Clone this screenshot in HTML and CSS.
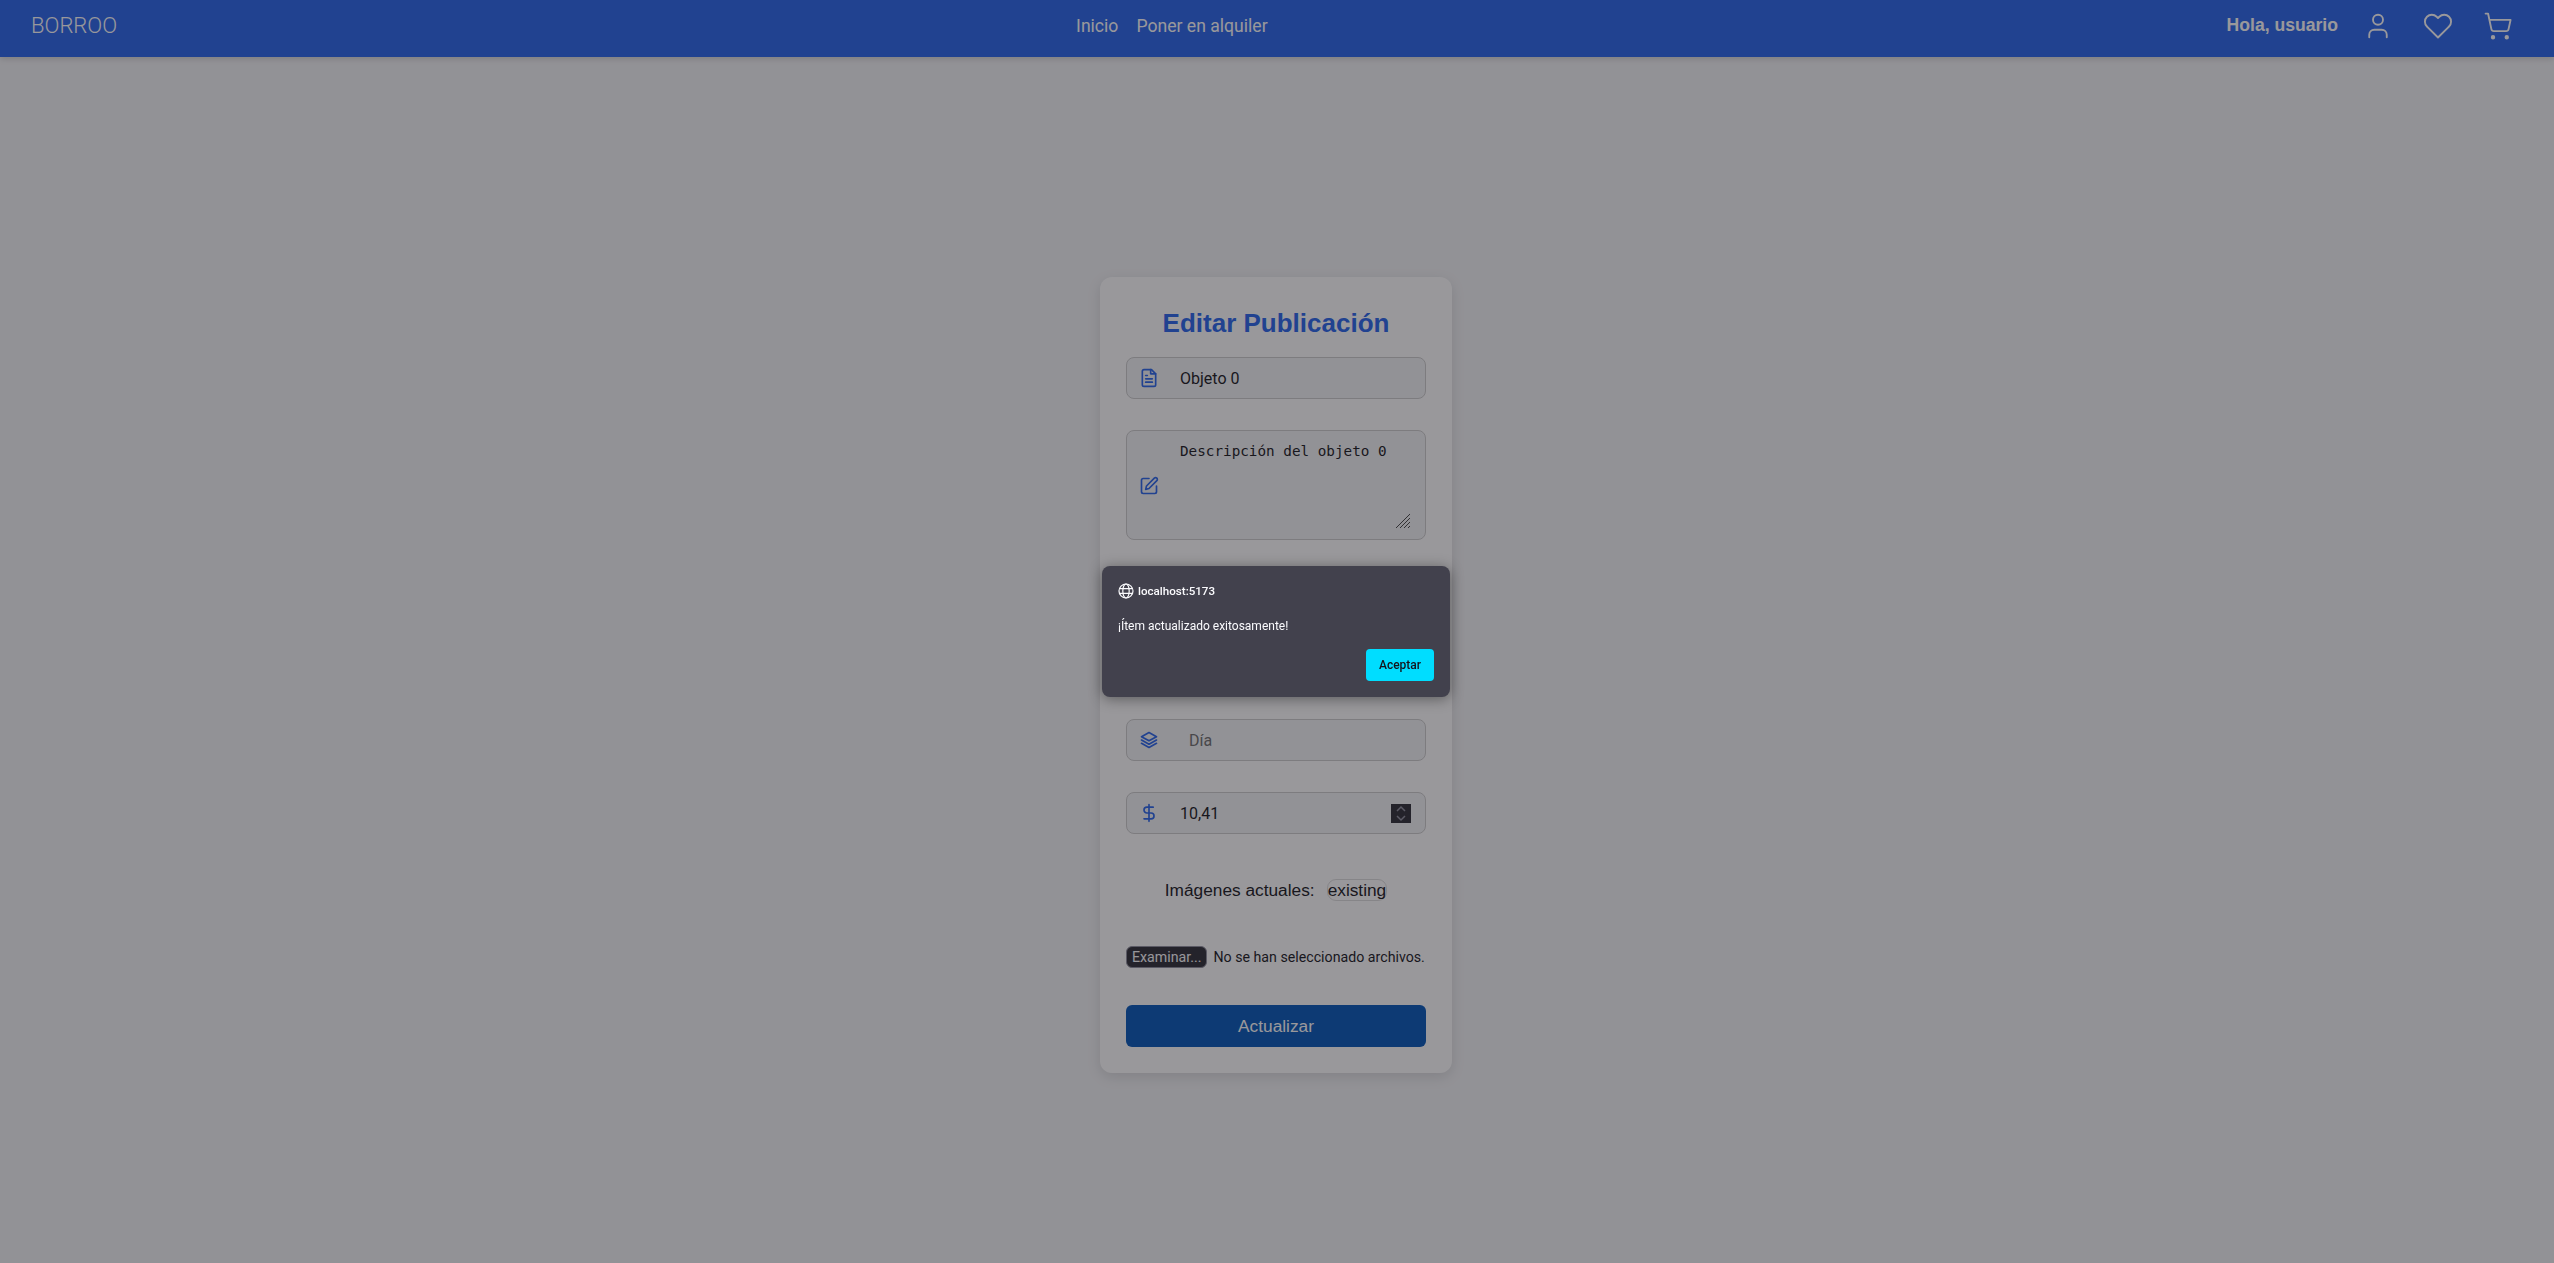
FILE: index.html
```html
<!DOCTYPE html>
<html lang="es">
<head>
    <meta charset="UTF-8">
    <meta name="viewport" content="width=device-width, initial-scale=1.0">
    <title>Borroo - Editar Publicación</title>
    <link rel="stylesheet" href="styles.css">
</head>
<body>
<nav class="navbar">
    <a class="logo">BORROO</a>
    <div class="nav-links">
        <a>Inicio</a>
        <a>Poner en alquiler</a>
    </div>
    <div class="nav-user">
        <span class="greeting">Hola, usuario</span>
        <svg class="nav-icon" viewBox="0 0 24 24"><path d="M19 21v-2a4 4 0 0 0-4-4H9a4 4 0 0 0-4 4v2"/><circle cx="12" cy="7" r="4"/></svg>
        <svg class="nav-icon" viewBox="0 0 24 24"><path d="M20.84 4.61a5.5 5.5 0 0 0-7.78 0L12 5.67l-1.06-1.06a5.5 5.5 0 0 0-7.78 7.78l1.06 1.06L12 21.23l7.78-7.78 1.06-1.06a5.5 5.5 0 0 0 0-7.78z"/></svg>
        <svg class="nav-icon" viewBox="0 0 24 24"><circle class="wheel" cx="8" cy="21" r="1"/><circle class="wheel" cx="19" cy="21" r="1"/><path d="M2.05 2.05h2l2.66 12.42a2 2 0 0 0 2 1.58h9.78a2 2 0 0 0 1.95-1.57l1.65-7.43H5.12"/></svg>
    </div>
</nav>

<main class="page">
    <form class="card">
        <h1>Editar Publicación</h1>

        <div class="field">
            <svg class="field-icon" viewBox="0 0 24 24"><path d="M15 2H6a2 2 0 0 0-2 2v16a2 2 0 0 0 2 2h12a2 2 0 0 0 2-2V7z"/><path d="M14 2v5h6"/><path d="M16 13H8"/><path d="M16 17H8"/><path d="M10 9H8"/></svg>
            <span class="value">Objeto 0</span>
        </div>

        <div class="field field-area">
            <svg class="field-icon" viewBox="0 0 24 24"><path d="M12 3H5a2 2 0 0 0-2 2v14a2 2 0 0 0 2 2h14a2 2 0 0 0 2-2v-7"/><path d="M18.4 2.6a2.1 2.1 0 0 1 3 3L12 15l-4 1 1-4z"/></svg>
            <span class="value mono">Descripción del objeto 0</span>
            <svg class="resizer" viewBox="0 0 14 14"><path d="M0 14 14 0M4 14 14 4M8 14l6-6M12 14l2-2"/></svg>
        </div>

        <div class="field"></div>
        <div class="field"></div>

        <div class="field">
            <svg class="field-icon" viewBox="0 0 24 24"><path d="M12 3 3 8l9 5 9-5z"/><path d="m3 12 9 5 9-5"/><path d="m3 16 9 5 9-5"/></svg>
            <span class="value placeholder">Día</span>
        </div>

        <div class="field">
            <svg class="field-icon" viewBox="0 0 24 24"><path d="M12 2v20"/><path d="M17 5H9.5a3.5 3.5 0 0 0 0 7h5a3.5 3.5 0 0 1 0 7H6"/></svg>
            <span class="value">10,41</span>
            <span class="spinner">
                <svg viewBox="0 0 20 19"><path d="m6 7 4-4 4 4M6 12l4 4 4-4"/></svg>
            </span>
        </div>

        <div class="current-images">
            <span>Imágenes actuales:</span>
            <span class="chip">existing</span>
        </div>

        <div class="file-row">
            <span class="file-button">Examinar...</span>
            <span class="file-name">No se han seleccionado archivos.</span>
        </div>

        <button type="button" class="submit">Actualizar</button>
    </form>
</main>

<div class="backdrop"></div>

<div class="dialog">
    <div class="dialog-origin">
        <svg class="globe" viewBox="0 0 16 16"><circle cx="8" cy="8" r="7"/><ellipse cx="8" cy="8" rx="3.2" ry="7"/><path d="M1.5 5.6h13M1.5 10.4h13"/></svg>
        <span>localhost:5173</span>
    </div>
    <p class="dialog-message">¡Ítem actualizado exitosamente!</p>
    <div class="dialog-actions">
        <button type="button" class="dialog-ok">Aceptar</button>
    </div>
</div>
</body>
</html>
```

FILE: styles.css
```css
body {
    margin: 0;
    min-height: 1263px;
    background-color: #f3f4f6;
    font-family: "Liberation Sans", Arial, sans-serif;
}

.navbar {
    display: flex;
    justify-content: space-between;
    align-items: center;
    height: 57px;
    box-sizing: border-box;
    padding: 0 41px 6px 31px;
    background-color: #2563eb;
    color: #fff;
    box-shadow: 0 2px 6px rgba(0, 0, 0, 0.15);
}

.logo {
    font-family: Roboto, sans-serif;
    font-size: 22px;
    font-weight: 300;
}

.nav-links {
    display: flex;
    gap: 18px;
    font-family: Roboto, sans-serif;
    font-size: 17.6px;
}

.nav-user {
    display: flex;
    align-items: center;
    gap: 30px;
}

.greeting {
    margin-right: -5px;
    font-size: 17.6px;
    font-weight: bold;
}

.nav-icon {
    width: 30px;
    height: 30px;
    fill: none;
    stroke: #fff;
    stroke-width: 1.5;
    stroke-linecap: round;
    stroke-linejoin: round;
}

.nav-icon .wheel {
    fill: #fff;
}

.page {
    display: flex;
    justify-content: center;
    padding-top: 220px;
    padding-right: 2px;
}

.card {
    display: flex;
    flex-direction: column;
    width: 352px;
    box-sizing: border-box;
    padding: 26px;
    background-color: #fff;
    border-radius: 12px;
    box-shadow: 0 4px 14px rgba(0, 0, 0, 0.12);
}

h1 {
    margin: 4px 0 17px;
    text-align: center;
    color: #2563eb;
    font-size: 26px;
    line-height: 33px;
}

.field {
    display: flex;
    align-items: center;
    flex-shrink: 0;
    height: 42px;
    box-sizing: border-box;
    margin-bottom: 31px;
    padding: 0 14px 0 12px;
    border: 1px solid #ccc;
    border-radius: 8px;
    background-color: #f3f4f6;
    position: relative;
}

.field-area {
    height: 110px;
    margin-bottom: 33px;
    align-items: flex-start;
}

.field-icon {
    width: 20px;
    height: 20px;
    flex-shrink: 0;
    fill: none;
    stroke: #2563eb;
    stroke-width: 2;
    stroke-linecap: round;
    stroke-linejoin: round;
}

.value {
    margin-left: 21px;
    font-family: Roboto, sans-serif;
    font-size: 16px;
    color: #15141a;
}

.placeholder {
    margin-left: 30px;
    color: #6d6d6d;
}

.mono {
    margin-top: 12px;
    font-family: "DejaVu Sans Mono", monospace;
    font-size: 14.3px;
}

.field-area .field-icon {
    margin-top: 45px;
}

.resizer {
    position: absolute;
    right: 15px;
    bottom: 11px;
    width: 14px;
    height: 14px;
    fill: none;
    stroke: #444;
    stroke-width: 1;
}

.spinner {
    display: flex;
    margin-left: auto;
    width: 20px;
    height: 19px;
    background-color: #2b2a33;
}

.spinner svg {
    width: 20px;
    height: 19px;
    fill: none;
    stroke: #8f8f9d;
    stroke-width: 1.5;
}

.current-images {
    display: flex;
    justify-content: center;
    align-items: center;
    gap: 12px;
    margin: 14px 0 45px;
    font-size: 17.3px;
    color: #15141a;
}

.chip {
    border: 1px solid #ddd;
    border-radius: 9px;
    line-height: 20px;
}

.file-row {
    display: flex;
    align-items: center;
    gap: 6px;
    margin-bottom: 37px;
    font-family: Roboto, sans-serif;
    font-size: 14.2px;
    color: #15141a;
    white-space: nowrap;
}

.file-button {
    padding: 2px 5px;
    background-color: #2b2a33;
    color: #fbfbfe;
    border: 1px solid #8f8f9d;
    border-radius: 6px;
}

.submit {
    height: 42px;
    border: none;
    border-radius: 6px;
    background-color: #0055b8;
    color: #fff;
    font-family: "Liberation Sans", Arial, sans-serif;
    font-size: 17.3px;
}

/* capa oscura del alert */
.backdrop {
    position: fixed;
    inset: 0;
    background-color: rgba(28, 27, 34, 0.45);
}

.dialog {
    position: absolute;
    top: 566px;
    left: 50%;
    width: 348px;
    height: 131px;
    margin-left: -175px;
    box-sizing: border-box;
    padding: 16px;
    background-color: #42414d;
    color: #fbfbfe;
    border-radius: 8px;
    box-shadow: 0 2px 14px rgba(0, 0, 0, 0.4);
    font-family: Roboto, sans-serif;
}

.dialog-origin {
    display: flex;
    align-items: center;
    gap: 4px;
    font-size: 11.6px;
    font-weight: 500;
    line-height: 18px;
}

.globe {
    width: 16px;
    height: 16px;
    fill: none;
    stroke: #fbfbfe;
    stroke-width: 1.2;
}

.dialog-message {
    margin: 17px 0 0;
    font-size: 12px;
    line-height: 18px;
}

.dialog-actions {
    display: flex;
    justify-content: flex-end;
    margin-top: 14px;
}

.dialog-ok {
    width: 68px;
    height: 32px;
    padding: 0;
    border: none;
    border-radius: 4px;
    background-color: #00ddff;
    color: #15141a;
    font-family: Roboto, sans-serif;
    font-size: 12px;
    font-weight: 500;
}
```
